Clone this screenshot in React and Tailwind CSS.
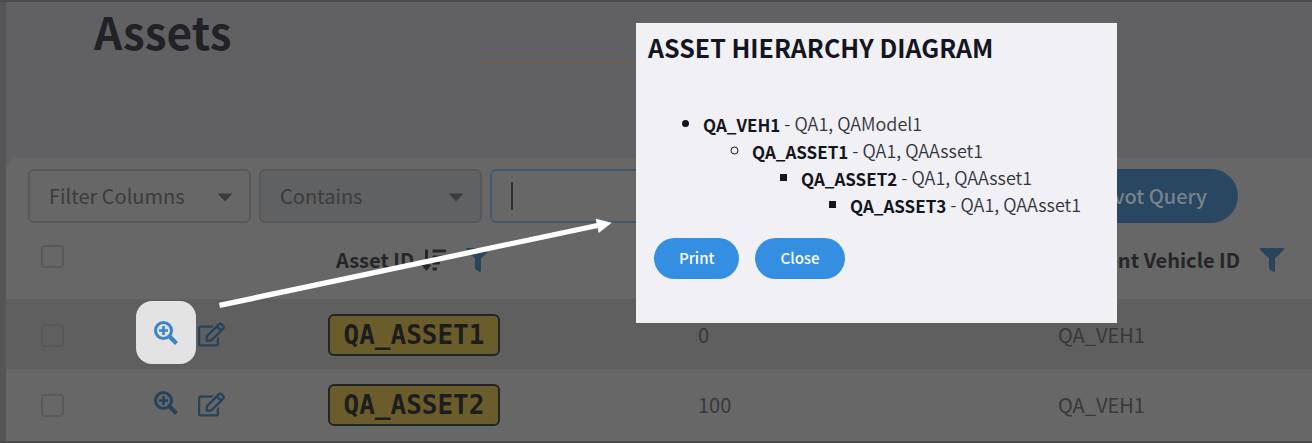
import { FaFilter, FaRegEdit, FaSortAmountDown } from "react-icons/fa";

const rows = [
  { id: "QA_ASSET1", count: "0", parent: "QA_VEH1", selected: true },
  { id: "QA_ASSET2", count: "100", parent: "QA_VEH1", selected: false },
];

const tree = {
  id: "QA_VEH1",
  detail: "QA1, QAModel1",
  child: {
    id: "QA_ASSET1",
    detail: "QA1, QAAsset1",
    child: {
      id: "QA_ASSET2",
      detail: "QA1, QAAsset1",
      child: { id: "QA_ASSET3", detail: "QA1, QAAsset1" },
    },
  },
};

const bullets = ["list-disc", "list-[circle]", "list-[square]", "list-[square]"];

function TreeNode({ node, depth }) {
  return (
    <ul className={`${bullets[depth]} ${depth === 0 ? "pl-[55px]" : "pl-[49px]"}`}>
      <li className="marker:text-[#15151f]">
        <strong className="align-[-1px] text-[17px] leading-none text-[#15151f]">{node.id}</strong>
        <span className="font-[350]"> - {node.detail}</span>
        {node.child && <TreeNode node={node.child} depth={depth + 1} />}
      </li>
    </ul>
  );
}

function ZoomPlus() {
  return (
    <svg viewBox="0 0 24 24" className="size-6" fill="none" stroke="currentColor" aria-hidden="true">
      <circle cx="9.5" cy="9.5" r="8" strokeWidth="3" />
      <path d="M9.5 5v9M5 9.5h9" strokeWidth="2.6" />
      <path d="M15.500 15.500l7 7" strokeWidth="4.200" />
    </svg>
  );
}

function Select({ label, className }) {
  return (
    <div className={`relative w-[223px] shrink-0 rounded-md border-2 border-[#585858] ${className}`}>
      <select aria-label={label} className="h-[50px] w-full appearance-none pl-[19px] text-[20px] text-[#3c3c3c] outline-none">
        <option>{label}</option>
      </select>
      <svg viewBox="0 0 16 9" className="pointer-events-none absolute top-[22px] right-4 w-4" fill="#3c3c3c" aria-hidden="true">
        <path d="M0.500 0.500H15.500L8 8.500Z" />
      </svg>
    </div>
  );
}

function Check({ label, faint }) {
  return (
    <input
      type="checkbox"
      aria-label={label}
      className={`block size-[23px] appearance-none rounded border-2 ${faint ? "border-[#595959]" : "border-[#5a5a5a]"}`}
    />
  );
}

export default function App() {
  return (
    <div className="relative flex min-h-screen border-t-2 border-b-2 border-[#4b4b4b] bg-[#616163] font-['Noto_Sans_CJK_JP','Noto_Sans_CJK_SC',sans-serif]">
      <div className="w-1.5 shrink-0 bg-[#555558]" />
      <main className="flex min-w-0 flex-1 flex-col">
        <header className="flex h-[156px] items-start">
          <h1 className="w-[474px] pl-[88px] text-[44px] leading-[58px] font-bold text-[#222226]">Assets</h1>
          <div className="mt-[60px] h-px w-[300px] bg-[#71623a]" />
        </header>
        <section className="flex-1 rounded-tl-xl bg-[#676767]">
          <div className="flex gap-2 pt-[11px] pr-[74px] pl-[22px]">
            <Select label="Filter Columns" className="bg-[#676767]" />
            <Select label="Contains" className="bg-[#5f6163]" />
            <div className="flex min-w-0 flex-1 items-center rounded-md border-2 border-[#415a6e] pl-[19px]">
              <span className="h-7 w-0.5 bg-[#303030]" />
              <input aria-label="Filter value" className="min-w-0 flex-1 outline-none" />
            </div>
            <button className="ml-2 rounded-full bg-[#2a4761] px-[31px] text-[20px] font-medium text-[#78828b]">
              Pivot Query
            </button>
          </div>
          <table className="w-full table-fixed text-left text-[20px] text-[#38383a]">
            <colgroup>
              <col className="w-[130px]" />
              <col className="w-[192px]" />
              <col className="w-[370px]" />
              <col className="w-[360px]" />
              <col />
            </colgroup>
            <thead>
              <tr className="h-[76px] text-[#262628]">
                <th className="pb-2.5 pl-[35px]"><Check label="Select all" /></th>
                <th />
                <th className="pb-0.5">
                  <span className="flex items-center pl-2">
                    Asset ID
                    <FaSortAmountDown className="ml-2 size-6" />
                    <FaFilter className="ml-5 size-6 text-[#29445c]" />
                  </span>
                </th>
                <th />
                <th className="pb-0.5">
                  <span className="flex items-center justify-end gap-5 pr-7 whitespace-nowrap">
                    Parent Vehicle ID
                    <FaFilter className="size-6 text-[#29445c]" />
                  </span>
                </th>
              </tr>
            </thead>
            <tbody>
              {rows.map((row) => (
                <tr key={row.id} className="h-[70px] odd:bg-[#5f5f5f]">
                  <td className="pt-0.5 pl-[35px]"><Check label={`Select ${row.id}`} faint={row.selected} /></td>
                  <td className="pb-1">
                    <div className="flex items-center gap-0.5 text-[#26435c]">
                      <button
                        aria-label="Show hierarchy"
                        className={`-my-1 flex h-[63px] w-[60px] items-center justify-center rounded-2xl pt-0.5 ${row.selected ? "bg-[#e3e3e3] text-[#3a84cc]" : ""}`}
                      >
                        <ZoomPlus />
                      </button>
                      <button aria-label="Edit" className="pt-1"><FaRegEdit className="size-[27px]" /></button>
                    </div>
                  </td>
                  <td className="pt-0.5">
                    <div className="flex h-[42px] w-[172px] items-center justify-center rounded-md border-2 border-[#242424] bg-[#6b5c2c] font-['DejaVu_Sans_Mono',monospace] text-[26px] leading-none font-bold text-[#1d1d1d]">
                      {row.id}
                    </div>
                  </td>
                  <td className="pt-px">{row.count}</td>
                  <td className="pt-px">{row.parent}</td>
                </tr>
              ))}
            </tbody>
          </table>
        </section>
      </main>

      <svg viewBox="0 0 394 92" className="pointer-events-none absolute top-[216px] left-[219px] w-[394px]" fill="#fff" aria-hidden="true">
        <path d="M0 84.700L378 5L379 10L1 90Z" />
        <path d="M376.700 0.700L392.700 4.700L379.700 15Z" />
      </svg>

      <div role="dialog" aria-labelledby="dialog-title" className="absolute top-[21px] left-[636px] h-[300px] w-[481px] bg-[#f0f0f5] px-3 text-[#33333d]">
        <h2 id="dialog-title" className="pt-1.5 text-[25px] leading-9 font-bold text-[#15151f]">ASSET HIERARCHY DIAGRAM</h2>
        <div className="mt-[45px] text-[18px] leading-[27px]">
          <TreeNode node={tree} depth={0} />
        </div>
        <div className="mt-5 flex gap-4 pl-1.5 text-[15px] font-medium text-white">
          <button className="h-[41px] rounded-full bg-[#348fe2] px-[25px]">Print</button>
          <button className="h-[41px] rounded-full bg-[#348fe2] px-[25px]">Close</button>
        </div>
      </div>
    </div>
  );
}
